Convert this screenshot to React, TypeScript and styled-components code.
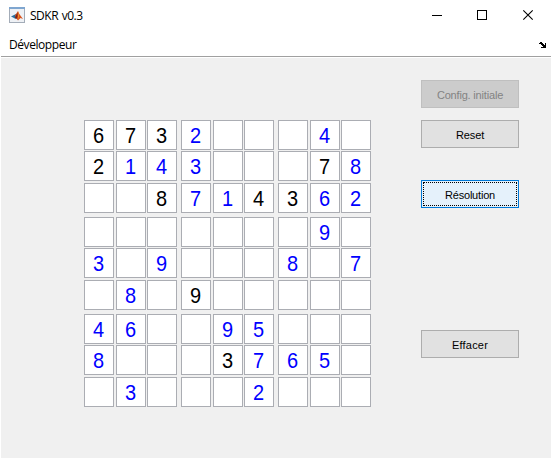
import React from 'react';
import styled, { createGlobalStyle } from 'styled-components';

const GlobalStyle = createGlobalStyle`
  html, body { margin: 0; padding: 0; background: #fff; overflow: hidden; }
  * { box-sizing: border-box; }
`;

const Window = styled.div`
  width: 552px;
  height: 459px;
  padding: 0 1px 1px;
  display: flex;
  flex-direction: column;
  background: #fff;
  color: #000;
`;

const TitleBar = styled.header`
  height: 31px;
  display: flex;
  align-items: center;
  padding-left: 8px;
`;

const AppIcon = styled.svg`
  display: block;
  width: 16px;
  height: 16px;
  margin-top: -1px;
`;

const Title = styled.h1`
  flex: 1;
  margin: 0 0 0 5px;
  font: 400 12px/16px 'Open Sans', sans-serif;
  letter-spacing: -0.5px;
  word-spacing: 1px;
`;

const Controls = styled.div`
  display: flex;
  height: 31px;
`;

const ControlButton = styled.button`
  width: 46px;
  height: 31px;
  padding: 0;
  border: 0;
  background: transparent;
  svg { display: block; }
`;

const MenuBar = styled.nav`
  height: 27px;
  padding: 0 5px 0 8px;
  display: flex;
  align-items: center;
  justify-content: space-between;
  box-shadow: inset 0 -1px #fff, inset 0 -2px #a0a0a0;
`;

const MenuItem = styled.span`
  font: 400 12px/16px 'Open Sans', sans-serif;
  letter-spacing: -0.43px;
`;

const Content = styled.main`
  flex: 1;
  display: flex;
  align-items: flex-start;
  padding: 22px 32px 0 83px;
  justify-content: space-between;
  background: #f0f0f0;
`;

const Board = styled.div`
  display: grid;
  margin-top: 40px;
  grid-template-columns: 32px 31px 34px 32px 31px 34px 32px 31px 30px;
  grid-template-rows: 31px 32px 34px 31px 32px 34px 31px 32px 30px;
`;

const Cell = styled.div<{ $given: boolean }>`
  width: 30px;
  height: 30px;
  border: 1px solid #abadb3;
  background: #fff;
  color: ${(p) => (p.$given ? '#000' : '#00f')};
  font: 400 20px/30px 'Liberation Sans', Arial, sans-serif;
  text-align: center;
  padding-right: 1px;
`;

const Digit = styled.span`
  display: block;
  transform: scaleY(1.07);
`;

const Actions = styled.div`
  display: flex;
  flex-direction: column;
`;

const Action = styled.button<{ $gap?: number; $focused?: boolean }>`
  width: 98px;
  height: 28px;
  margin: ${(p) => p.$gap ?? 0}px 0 0;
  padding: 1px;
  border: 1px solid ${(p) => (p.$focused ? '#0078d7' : '#adadad')};
  background: ${(p) => (p.$focused ? '#e5f1fb' : '#e1e1e1')};
  color: #000;
  font: 400 11px/22px 'Liberation Sans', Arial, sans-serif;
  &:disabled {
    border-color: #bfbfbf;
    background: #ccc;
    color: #838383;
  }
`;

const Label = styled.span<{ $focused?: boolean; $spacing: number }>`
  display: block;
  height: 24px;
  padding-top: 1px;
  border: 1px dotted ${(p) => (p.$focused ? '#000' : 'transparent')};
  letter-spacing: ${(p) => p.$spacing}px;
`;

// A "g" prefix marks a given digit, "." an empty cell.
const rows = [
  'g6 g7 g3 2 . . . 4 .',
  'g2 1 4 3 . . . g7 8',
  '. . g8 7 1 g4 g3 6 2',
  '. . . . . . . 9 .',
  '3 . 9 . . . 8 . 7',
  '. 8 . g9 . . . . .',
  '4 6 . . 9 5 . . .',
  '8 . . . g3 7 6 5 .',
  '. 3 . . . 2 . . .',
];

const actions = [
  { label: 'Config. initiale', gap: 0, disabled: true, spacing: -0.18 },
  { label: 'Reset', gap: 12, spacing: -0.1 },
  { label: 'Résolution', gap: 32, focused: true, spacing: -0.2 },
  { label: 'Effacer', gap: 122, spacing: 0.2 },
];

export default function App() {
  return (
    <>
      <GlobalStyle />
      <Window>
        <TitleBar>
          <AppIcon viewBox="0 0 16 16">
            <rect x="0.5" y="0.5" width="15" height="15" fill="#eef1f5" stroke="#a3acb8" />
            <rect x="0" y="0" width="16" height="2" fill="#7fa6d0" />
            <path d="M2 9.5L5 8l2-1 2 2-2.5 3L5 11z" fill="#2a6f9e" />
            <path d="M6 8.5L9 4l1.3 3L14 12l-2.500-1L9 13.500 7 11z" fill="#d9541e" />
            <path d="M6 10.500L8.500 5.500v4L7.500 12z" fill="#7d2013" />
            <path d="M9 4.500L10 9l-1 4z" fill="#f39a2c" />
          </AppIcon>
          <Title>SDKR v0.3</Title>
          <Controls>
            <ControlButton aria-label="Minimize">
              <svg width="46" height="31" shapeRendering="crispEdges">
                <rect x="19" y="15" width="10" height="1" />
              </svg>
            </ControlButton>
            <ControlButton aria-label="Maximize">
              <svg width="46" height="31" shapeRendering="crispEdges">
                <rect x="18.5" y="10.5" width="9" height="9" fill="none" stroke="#000" />
              </svg>
            </ControlButton>
            <ControlButton aria-label="Close">
              <svg width="46" height="31">
                <path d="M18.300 10.300l9.400 9.400M27.700 10.300l-9.400 9.400" fill="none" stroke="#000" strokeWidth="1.1" />
              </svg>
            </ControlButton>
          </Controls>
        </TitleBar>
        <MenuBar>
          <MenuItem>Développeur</MenuItem>
          <svg width="7" height="6" shapeRendering="crispEdges">
            <path d="M0 1h1V0h2v1h1v1h1v1h1V1h1v5H2V5h2V4H3V3H2V2H0z" />
          </svg>
        </MenuBar>
        <Content>
          <Board>
            {rows.flatMap((row, r) =>
              row.split(' ').map((v, c) => (
                <Cell key={`${r}-${c}`} $given={v.startsWith('g')}>
                  {v !== '.' && <Digit>{v.replace('g', '')}</Digit>}
                </Cell>
              )),
            )}
          </Board>
          <Actions>
            {actions.map((a) => (
              <Action key={a.label} $gap={a.gap} $focused={a.focused} disabled={a.disabled}>
                <Label $focused={a.focused} $spacing={a.spacing}>{a.label}</Label>
              </Action>
            ))}
          </Actions>
        </Content>
      </Window>
    </>
  );
}
